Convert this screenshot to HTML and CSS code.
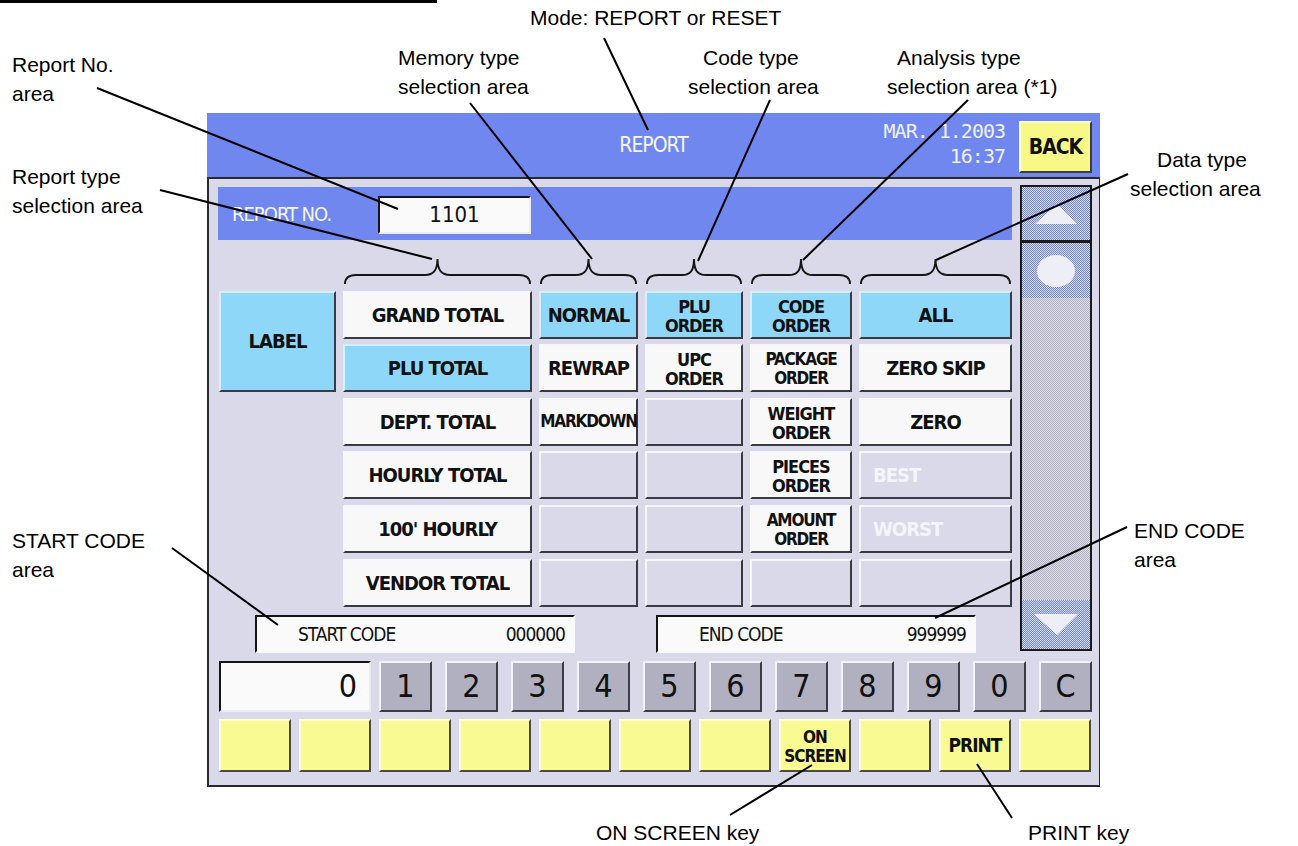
FILE: index.html
```html
<!DOCTYPE html>
<html lang="en">
<head>
    <meta charset="UTF-8">
    <meta name="viewport" content="width=device-width, initial-scale=1.0">
    <title>Report Screen</title>
    <link rel="stylesheet" href="styles.css">
</head>
<body>
<div id="page">
    <div class="topRule"></div>

    <div id="screen">
        <div class="header">
            <div class="title">REPORT</div>
            <div class="headRight">
                <div class="clock">MAR. 1.2003<br>16:37</div>
                <div class="back">BACK</div>
            </div>
        </div>

        <div class="panel">
            <div class="upper">
                <div class="main">
                    <div class="reportBar">
                        <span class="barLabel">REPORT NO.</span>
                        <div class="inset reportNo">1101</div>
                    </div>

                    <div class="grid">
                        <div></div>
                        <div class="brace"><svg width="189" height="30" viewBox="0 0 189 30"><path d="M2,29 C2,23 5,20 13,20 L82,20 C90,20 94.5,16 94.5,4 C94.5,16 99,20 107,20 L176,20 C184,20 187,23 187,29"/></svg></div>
                        <div class="brace"><svg width="99" height="30" viewBox="0 0 99 30"><path d="M2,29 C2,23 5,20 13,20 L37,20 C45,20 49.5,16 49.5,4 C49.5,16 54,20 62,20 L86,20 C94,20 97,23 97,29"/></svg></div>
                        <div class="brace"><svg width="98" height="30" viewBox="0 0 98 30"><path d="M2,29 C2,23 5,20 13,20 L37,20 C45,20 49,16 49,4 C49,16 53,20 61,20 L85,20 C93,20 96,23 96,29"/></svg></div>
                        <div class="brace"><svg width="102" height="30" viewBox="0 0 102 30"><path d="M2,29 C2,23 5,20 13,20 L39,20 C47,20 51,16 51,4 C51,16 55,20 63,20 L89,20 C97,20 100,23 100,29"/></svg></div>
                        <div class="brace"><svg width="153" height="30" viewBox="0 0 153 30"><path d="M2,29 C2,23 5,20 13,20 L64,20 C72,20 76.5,16 76.5,4 C76.5,16 81,20 89,20 L140,20 C148,20 151,23 151,29"/></svg></div>

                        <div class="btn sel labelKey">LABEL</div>
                        <div class="btn">GRAND TOTAL</div>
                        <div class="btn sel">NORMAL</div>
                        <div class="btn sel two">PLU<br>ORDER</div>
                        <div class="btn sel two">CODE<br>ORDER</div>
                        <div class="btn sel">ALL</div>

                        <div class="btn sel">PLU TOTAL</div>
                        <div class="btn">REWRAP</div>
                        <div class="btn two">UPC<br>ORDER</div>
                        <div class="btn two tight">PACKAGE<br>ORDER</div>
                        <div class="btn">ZERO SKIP</div>

                        <div></div>
                        <div class="btn">DEPT. TOTAL</div>
                        <div class="btn tight">MARKDOWN</div>
                        <div class="btn empty"></div>
                        <div class="btn two">WEIGHT<br>ORDER</div>
                        <div class="btn">ZERO</div>

                        <div></div>
                        <div class="btn">HOURLY TOTAL</div>
                        <div class="btn empty"></div>
                        <div class="btn empty"></div>
                        <div class="btn two">PIECES<br>ORDER</div>
                        <div class="btn off">BEST</div>

                        <div></div>
                        <div class="btn">100' HOURLY</div>
                        <div class="btn empty"></div>
                        <div class="btn empty"></div>
                        <div class="btn two tight">AMOUNT<br>ORDER</div>
                        <div class="btn off">WORST</div>

                        <div></div>
                        <div class="btn">VENDOR TOTAL</div>
                        <div class="btn empty"></div>
                        <div class="btn empty"></div>
                        <div class="btn empty"></div>
                        <div class="btn empty"></div>
                    </div>

                    <div class="codes">
                        <div class="inset codeBox"><span>START CODE</span><span>000000</span></div>
                        <div class="inset codeBox"><span>END CODE</span><span>999999</span></div>
                    </div>
                </div>

                <div class="scroll">
                    <div class="sBtn sUp">
                        <svg width="44" height="22" viewBox="0 0 44 22"><polygon points="1,21 23,1 43,21"/></svg>
                    </div>
                    <div class="sBtn sDot">
                        <svg width="38" height="32" viewBox="0 0 38 32"><ellipse cx="19" cy="16" rx="19" ry="16"/></svg>
                    </div>
                    <div class="track"></div>
                    <div class="sBtn sDown">
                        <svg width="46" height="23" viewBox="0 0 46 23"><polygon points="1,1 45,1 24,22"/></svg>
                    </div>
                </div>
            </div>

            <div class="keypad">
                <div class="inset display">0</div>
                <div class="keys">
                    <div class="key">1</div>
                    <div class="key">2</div>
                    <div class="key">3</div>
                    <div class="key">4</div>
                    <div class="key">5</div>
                    <div class="key">6</div>
                    <div class="key">7</div>
                    <div class="key">8</div>
                    <div class="key">9</div>
                    <div class="key">0</div>
                    <div class="key">C</div>
                </div>
            </div>

            <div class="softkeys">
                <div class="soft"></div>
                <div class="soft"></div>
                <div class="soft"></div>
                <div class="soft"></div>
                <div class="soft"></div>
                <div class="soft"></div>
                <div class="soft"></div>
                <div class="soft two">ON<br>SCREEN</div>
                <div class="soft"></div>
                <div class="soft">PRINT</div>
                <div class="soft"></div>
            </div>
        </div>
    </div>

    <!-- callout labels -->
    <div class="note nMode">Mode: REPORT or RESET</div>
    <div class="note nRepNo">Report No.<br>area</div>
    <div class="note nMem">Memory type<br>selection area</div>
    <div class="note nCode">Code type<br>selection area</div>
    <div class="note nAna">Analysis type<br>selection area (*1)</div>
    <div class="note nRepType">Report type<br>selection area</div>
    <div class="note nData">Data type<br>selection area</div>
    <div class="note nStart">START CODE<br>area</div>
    <div class="note nEnd">END CODE<br>area</div>
    <div class="note nOn">ON SCREEN key</div>
    <div class="note nPrint">PRINT key</div>

    <svg class="leaders" width="1298" height="846" viewBox="0 0 1298 846">
        <line x1="97" y1="88" x2="398" y2="209"/>
        <line x1="160" y1="190" x2="432" y2="259"/>
        <line x1="470" y1="103" x2="592" y2="259"/>
        <line x1="604" y1="38" x2="648" y2="130"/>
        <line x1="770" y1="100" x2="698" y2="261"/>
        <line x1="968" y1="100" x2="803" y2="260"/>
        <line x1="1128" y1="174" x2="936" y2="260"/>
        <line x1="172" y1="548" x2="278" y2="625"/>
        <line x1="1127" y1="527" x2="935" y2="618"/>
        <line x1="730" y1="815" x2="812" y2="765"/>
        <line x1="1012" y1="818" x2="977" y2="764"/>
    </svg>
</div>
</body>
</html>
```

FILE: styles.css
```css
body {
    margin: 0;
    background: #fff;
    font-family: "Liberation Sans", Arial, sans-serif;
}
#page {
    position: relative;
    width: 1298px;
    height: 846px;
    overflow: hidden;
}
.topRule {
    width: 437px;
    height: 3px;
    background: #000;
}

/* ---- the terminal screen ---- */
#screen {
    width: 893px;
    margin: 110px 0 0 207px;
    font-family: "DejaVu Sans Condensed", "Liberation Sans Narrow", sans-serif;
    color: #111;
}
.header {
    height: 64px;
    box-sizing: border-box;
    background: #6f87ee;
    display: grid;
    grid-template-columns: 1fr auto 1fr;
    align-items: center;
    padding: 0 8px;
}
.title {
    grid-column: 2;
    color: #f6f6ff;
    font-size: 21px;
    letter-spacing: -1px;
}
.headRight {
    grid-column: 3;
    justify-self: end;
    display: flex;
    align-items: center;
    gap: 14px;
    margin-top: 4px;
}
.clock {
    font-family: "DejaVu Sans Mono", "Liberation Mono", monospace;
    font-size: 20px;
    line-height: 25px;
    letter-spacing: -1px;
    color: #eef0ff;
    text-align: right;
    margin-top: -6px;
}
.back {
    width: 73px;
    height: 52px;
    box-sizing: border-box;
    background: #f8f886;
    border: 2px solid;
    border-color: #fbfbd8 #3c3c40 #3c3c40 #fbfbd8;
    display: flex;
    align-items: center;
    justify-content: center;
    font-weight: bold;
    font-size: 21px;
    letter-spacing: -1px;
}

.panel {
    box-sizing: border-box;
    border: 2px solid #2a2a2e;
    border-right-width: 1px;
    background: #d9d9e9;
    padding: 6px 7px 13px 10px;
}
.upper {
    display: flex;
    gap: 8px;
}
.main {
    flex: 1;
    padding-top: 2px;
}

.inset {
    box-sizing: border-box;
    background: #fafafa;
    border: 2px solid;
    border-color: #151515 #ececf2 #ececf2 #151515;
}

.reportBar {
    height: 53px;
    margin-left: -1px;
    background: #6f87ee;
    display: flex;
    align-items: flex-start;
}
.barLabel {
    width: 146px;
    padding-left: 14px;
    margin-top: 15px;
    color: #f6f6ff;
    font-size: 20px;
    letter-spacing: -1px;
}
.reportNo {
    width: 153px;
    height: 38px;
    margin-top: 9px;
    text-align: center;
    font-size: 22px;
    line-height: 34px;
}

/* ---- selection buttons ---- */
.grid {
    display: grid;
    grid-template-columns: 117px 189px 99px 98px 102px 153px;
    grid-template-rows: 30px repeat(6, 48px);
    column-gap: 7px;
    row-gap: 5.6px;
    margin-top: 15px;
}
.brace svg {
    display: block;
}
.brace path {
    fill: none;
    stroke: #151515;
    stroke-width: 2;
}
.btn {
    box-sizing: border-box;
    border: 2px solid;
    border-color: #f6f6fc #3a3a44 #3a3a44 #f6f6fc;
    background: #f8f8f8;
    display: flex;
    align-items: center;
    justify-content: center;
    text-align: center;
    font-weight: bold;
    font-size: 20px;
    letter-spacing: -1px;
    line-height: 1;
}
.btn.sel {
    background: #8fd7f8;
    border-color: #d4f0ff #3a3a44 #3a3a44 #d4f0ff;
}
.btn.empty {
    background: #d9d9e9;
}
.btn.off {
    background: #d9d9e9;
    color: #f4f4fc;
    justify-content: flex-start;
    padding-left: 12px;
}
.btn.two {
    font-size: 18px;
    line-height: 19px;
    padding-top: 2px;
}
.btn.tight {
    font-size: 17px;
    letter-spacing: -1.2px;
}
.labelKey {
    grid-row: span 2;
}

.codes {
    display: flex;
    gap: 81px;
    margin-top: 8px;
    padding-left: 36px;
}
.codeBox {
    width: 320px;
    height: 38px;
    border-color: #151515 #fafafa #fafafa #151515;
    display: flex;
    align-items: center;
    justify-content: space-between;
    padding: 0 8px 0 41px;
    font-size: 19px;
    letter-spacing: -1px;
}

/* ---- scroll column ---- */
.scroll {
    width: 72px;
    height: 466px;
    box-sizing: border-box;
    border: 2px solid #1a1a1a;
    display: flex;
    flex-direction: column;
    background: repeating-conic-gradient(#b2b2c2 0% 25%, #dcdce8 0% 50%) 0 0 / 2px 2px;
}
.sBtn {
    display: flex;
    align-items: center;
    justify-content: center;
    background: repeating-conic-gradient(#6c84e8 0% 25%, #dcdcf0 0% 50%) 0 0 / 2px 2px;
}
.sBtn svg {
    fill: #eeeef6;
}
.sUp {
    height: 53px;
    border-bottom: 3px solid #1a1a1a;
}
.sDot {
    height: 55px;
}
.track {
    flex: 1;
}
.sDown {
    height: 49px;
}

/* ---- keypad ---- */
.keypad {
    display: flex;
    margin-top: 8px;
}
.display {
    width: 152px;
    height: 51px;
    margin-right: 8px;
    text-align: right;
    padding-right: 12px;
    font-size: 32px;
    line-height: 47px;
}
.keys {
    display: flex;
    gap: 13px;
}
.key {
    width: 53px;
    height: 51px;
    box-sizing: border-box;
    background: #b0b0c0;
    border: 2px solid;
    border-color: #f2f2fa #3c3c44 #3c3c44 #f2f2fa;
    display: flex;
    align-items: center;
    justify-content: center;
    font-size: 32px;
}
.softkeys {
    display: flex;
    gap: 8px;
    margin-top: 7px;
}
.soft {
    width: 72px;
    height: 53px;
    box-sizing: border-box;
    background: #fafa92;
    border: 2px solid;
    border-color: #fdfdd8 #4a4a4e #4a4a4e #fdfdd8;
    display: flex;
    align-items: center;
    justify-content: center;
    text-align: center;
    font-weight: bold;
    font-size: 19px;
    line-height: 20px;
    letter-spacing: -1px;
}
.soft.two {
    font-size: 17px;
    line-height: 19px;
    padding-top: 3px;
}

/* ---- callouts ---- */
.note {
    position: absolute;
    font-size: 21px;
    line-height: 29px;
    white-space: nowrap;
    color: #000;
}
.nMode { left: 530px; top: 3px; }
.nRepNo { left: 12px; top: 50px; }
.nMem { left: 398px; top: 43px; }
.nCode { left: 688px; top: 43px; text-indent: 15px; }
.nAna { left: 887px; top: 43px; text-indent: 10px; }
.nRepType { left: 12px; top: 162px; }
.nData { left: 1130px; top: 145px; text-indent: 27px; }
.nStart { left: 12px; top: 526px; }
.nEnd { left: 1134px; top: 516px; }
.nOn { left: 596px; top: 818px; }
.nPrint { left: 1028px; top: 818px; }

.leaders {
    position: absolute;
    left: 0;
    top: 0;
    pointer-events: none;
}
.leaders line {
    stroke: #000;
    stroke-width: 2;
}
```
